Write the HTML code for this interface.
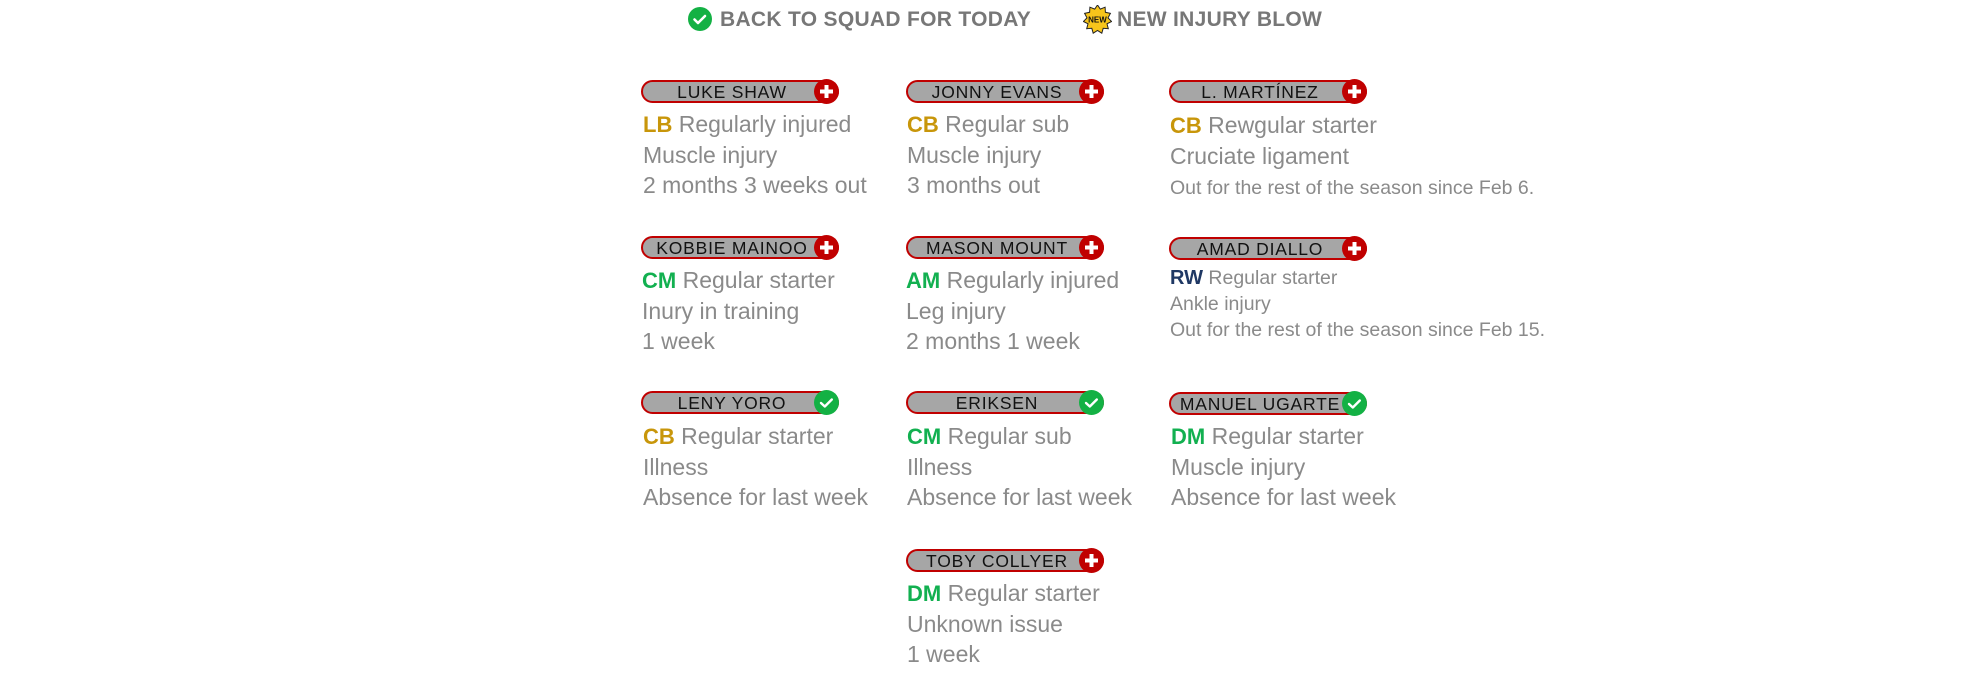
<!DOCTYPE html>
<html><head><meta charset="utf-8">
<style>
html,body{margin:0;padding:0;background:#fff;width:1984px;height:693px;overflow:hidden;position:relative;font-family:"Liberation Sans",sans-serif;}
.hd{position:absolute;top:7px;font-weight:bold;font-size:21px;color:#777;letter-spacing:0.3px;line-height:26px;}
.pill{position:absolute;width:194px;height:19px;background:#a6a6a6;border:2px solid #c00000;border-radius:12px;}
.pill span{position:absolute;left:0;right:16px;top:0;text-align:center;font-size:17.5px;line-height:20px;color:#111;letter-spacing:0.8px;}
.ic{position:absolute;right:-2px;top:-3px;width:25px;height:25px;}
.t{position:absolute;font-size:23px;color:#8a8a8a;line-height:30px;white-space:nowrap;}
.s{font-size:19.5px;line-height:26px;}
.p{font-weight:bold;font-family:"Liberation Sans Narrow","Liberation Sans",sans-serif;font-size:22px;}
.y{color:#c8960a}.g{color:#12b050}.n{color:#1f3864}
</style></head><body>
<svg style="position:absolute;left:688px;top:7px" width="24" height="24" viewBox="0 0 24 24"><circle cx="12" cy="12" r="12" fill="#13b144"/><path d="M6.5 12.5l3.5 3.5 7-7" stroke="#fff" stroke-width="2.6" fill="none" stroke-linecap="round" stroke-linejoin="round"/></svg>
<div class="hd" style="left:720px">BACK TO SQUAD FOR TODAY</div>
<svg style="position:absolute;left:1083px;top:5px" width="29" height="29" viewBox="0 0 29 29"><polygon points="14.5,0 17.3,4.1 22.1,2.2 22.4,7.3 27.4,8.4 25,12.9 28.6,16.5 24,18.8 25.3,23.7 20.2,23.3 18.8,28.2 14.5,25.5 10.2,28.2 8.8,23.3 3.7,23.7 5,18.8 0.4,16.5 4,12.9 1.6,8.4 6.6,7.3 6.9,2.2 11.7,4.1" fill="#f7c51b" stroke="#222" stroke-width="1"/><text x="14.5" y="17.5" text-anchor="middle" font-family="Liberation Sans" font-weight="bold" font-size="8" fill="#111">NEW</text></svg>
<div class="hd" style="left:1117px">NEW INJURY BLOW</div>

<div class="pill" style="left:641px;top:80px"><span>LUKE SHAW</span><svg class="ic" viewBox="0 0 25 25"><circle cx="12.5" cy="12.5" r="12.5" fill="#c00000"/><path d="M12.5 6v13M6 12.5h13" stroke="#fff" stroke-width="4"/></svg></div>
<div class="pill" style="left:906px;top:80px"><span>JONNY EVANS</span><svg class="ic" viewBox="0 0 25 25"><circle cx="12.5" cy="12.5" r="12.5" fill="#c00000"/><path d="M12.5 6v13M6 12.5h13" stroke="#fff" stroke-width="4"/></svg></div>
<div class="pill" style="left:1169px;top:80px"><span>L. MARTÍNEZ</span><svg class="ic" viewBox="0 0 25 25"><circle cx="12.5" cy="12.5" r="12.5" fill="#c00000"/><path d="M12.5 6v13M6 12.5h13" stroke="#fff" stroke-width="4"/></svg></div>

<div class="pill" style="left:641px;top:236px"><span>KOBBIE MAINOO</span><svg class="ic" viewBox="0 0 25 25"><circle cx="12.5" cy="12.5" r="12.5" fill="#c00000"/><path d="M12.5 6v13M6 12.5h13" stroke="#fff" stroke-width="4"/></svg></div>
<div class="pill" style="left:906px;top:236px"><span>MASON MOUNT</span><svg class="ic" viewBox="0 0 25 25"><circle cx="12.5" cy="12.5" r="12.5" fill="#c00000"/><path d="M12.5 6v13M6 12.5h13" stroke="#fff" stroke-width="4"/></svg></div>
<div class="pill" style="left:1169px;top:237px"><span>AMAD DIALLO</span><svg class="ic" viewBox="0 0 25 25"><circle cx="12.5" cy="12.5" r="12.5" fill="#c00000"/><path d="M12.5 6v13M6 12.5h13" stroke="#fff" stroke-width="4"/></svg></div>

<div class="pill" style="left:641px;top:391px"><span>LENY YORO</span><svg class="ic" viewBox="0 0 25 25"><circle cx="12.5" cy="12.5" r="12.5" fill="#13b144"/><path d="M7 13l3.8 3.5 7-7" stroke="#fff" stroke-width="2.4" fill="none" stroke-linecap="round" stroke-linejoin="round"/></svg></div>
<div class="pill" style="left:906px;top:391px"><span>ERIKSEN</span><svg class="ic" viewBox="0 0 25 25"><circle cx="12.5" cy="12.5" r="12.5" fill="#13b144"/><path d="M7 13l3.8 3.5 7-7" stroke="#fff" stroke-width="2.4" fill="none" stroke-linecap="round" stroke-linejoin="round"/></svg></div>
<div class="pill" style="left:1169px;top:392px"><span>MANUEL UGARTE</span><svg class="ic" viewBox="0 0 25 25"><circle cx="12.5" cy="12.5" r="12.5" fill="#13b144"/><path d="M7 13l3.8 3.5 7-7" stroke="#fff" stroke-width="2.4" fill="none" stroke-linecap="round" stroke-linejoin="round"/></svg></div>

<div class="pill" style="left:906px;top:549px"><span>TOBY COLLYER</span><svg class="ic" viewBox="0 0 25 25"><circle cx="12.5" cy="12.5" r="12.5" fill="#c00000"/><path d="M12.5 6v13M6 12.5h13" stroke="#fff" stroke-width="4"/></svg></div>

<div class="t" style="left:643px;top:109px"><span class="p y">LB</span> Regularly injured<br>Muscle injury<br>2 months 3 weeks out</div>
<div class="t" style="left:907px;top:109px"><span class="p y">CB</span> Regular sub<br>Muscle injury<br>3 months out</div>
<div class="t" style="left:1170px;top:110px"><span class="p y">CB</span> Rewgular starter<br>Cruciate ligament<br><span class="s">Out for the rest of the season since Feb 6.</span></div>

<div class="t" style="left:642px;top:265px"><span class="p g">CM</span> Regular starter<br>Inury in training<br>1 week</div>
<div class="t" style="left:906px;top:265px"><span class="p g">AM</span> Regularly injured<br>Leg injury<br>2 months 1 week</div>
<div class="t s" style="left:1170px;top:265px"><span class="p n" style="font-size:20px">RW</span> Regular starter<br>Ankle injury<br>Out for the rest of the season since Feb 15.</div>

<div class="t" style="left:643px;top:421px"><span class="p y">CB</span> Regular starter<br>Illness<br>Absence for last week</div>
<div class="t" style="left:907px;top:421px"><span class="p g">CM</span> Regular sub<br>Illness<br>Absence for last week</div>
<div class="t" style="left:1171px;top:421px"><span class="p g">DM</span> Regular starter<br>Muscle injury<br>Absence for last week</div>

<div class="t" style="left:907px;top:578px"><span class="p g">DM</span> Regular starter<br>Unknown issue<br>1 week</div>
</body></html>
